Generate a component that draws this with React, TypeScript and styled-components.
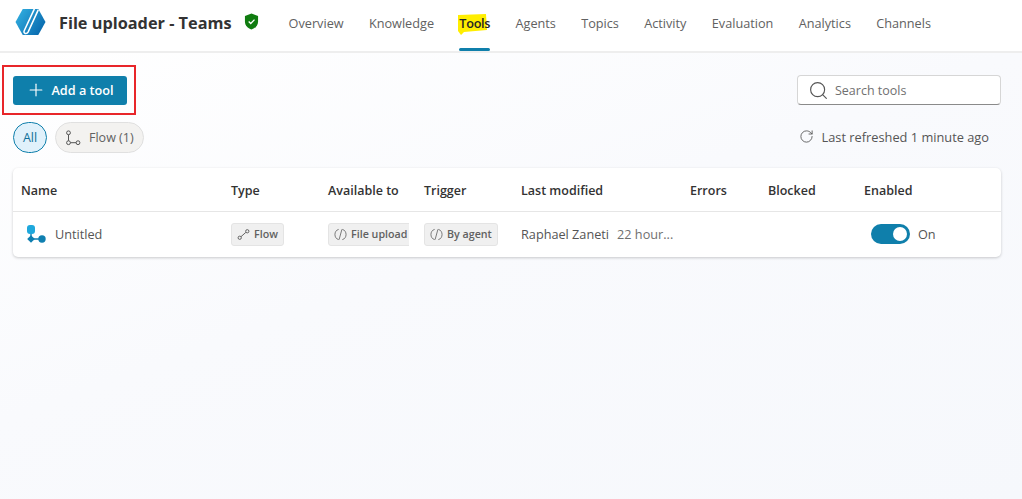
import React from 'react';
import styled, { createGlobalStyle } from 'styled-components';
import { Plus, Search, RotateCw } from 'lucide-react';

const NAV_ITEMS = ['Overview', 'Knowledge', 'Tools', 'Agents', 'Topics', 'Activity', 'Evaluation', 'Analytics', 'Channels'];
const COLUMNS = ['Name', 'Type', 'Available to', 'Trigger', 'Last modified', 'Errors', 'Blocked', 'Enabled'];
const GRID = '210px 97px 96px 97px 169px 78px 96px 1fr';

const App: React.FC = () => {
  return (
    <Page>
      <GlobalStyle />
      <Header>
        <Logo viewBox="0 0 32 28">
          <defs>
            <linearGradient id="logoFill" x1="0" y1="0" x2="1" y2="0.6">
              <stop offset="0" stopColor="#35b4e4" />
              <stop offset="1" stopColor="#0a6cb0" />
            </linearGradient>
          </defs>
          <path d="M8 0.500h16l7.500 13.500L24 27.500H8L0.500 14z" fill="url(#logoFill)" />
          <path d="M20 0.500 9.500 23c-1.200 3 2.500 4 4 1.500L24 1.500" fill="none" stroke="#fff" strokeWidth="1.600" />
        </Logo>
        <Title>File uploader - Teams</Title>
        <Shield viewBox="0 0 16 18">
          <path d="M8 0.500 15 3v6c0 4.500-3 7.200-7 8.500C4 16.200 1 13.500 1 9V3z" fill="#107c10" />
          <path d="M5 9l2.200 2.200L11.200 7" fill="none" stroke="#fff" strokeWidth="1.400" />
        </Shield>
        <Nav>
          {NAV_ITEMS.map((item) => (
            <NavItem key={item} $active={item === 'Tools'}>
              {item === 'Tools' && (
                <Highlight viewBox="0 0 32 21" preserveAspectRatio="none">
                  <path d="M3 1 31 0 32 16 9 18 6 21 3 17z" fill="#ffee00" />
                </Highlight>
              )}
              <NavLabel>{item}</NavLabel>
            </NavItem>
          ))}
        </Nav>
      </Header>

      <Content>
        <TopRow>
          <Annotated>
            <PrimaryButton>
              <Plus size={20} strokeWidth={1.4} />
              Add a tool
            </PrimaryButton>
          </Annotated>
          <SearchBox>
            <Search size={21} strokeWidth={1.3} color="#555" />
            <SearchText>Search tools</SearchText>
          </SearchBox>
        </TopRow>

        <FilterRow>
          <Chips>
            <AllChip>All</AllChip>
            <FlowChip>
              <ChipIcon viewBox="0 0 16 16">
                <circle cx="3.500" cy="2.800" r="1.900" />
                <circle cx="3.500" cy="12.700" r="1.900" />
                <circle cx="13" cy="12.700" r="1.900" />
                <path d="M3.500 4.700v6.100M5.400 12.700h5.700" />
              </ChipIcon>
              Flow (1)
            </FlowChip>
          </Chips>
          <Refreshed>
            <RotateCw size={15} strokeWidth={1.4} color="#555" />
            Last refreshed 1 minute ago
          </Refreshed>
        </FilterRow>

        <Card>
          <HeadRow>
            {COLUMNS.map((col) => (
              <span key={col}>{col}</span>
            ))}
          </HeadRow>
          <BodyRow>
            <NameCell>
              <FlowIcon viewBox="0 0 20 20">
                <path d="M5 9v6h10" stroke="#0f7fb0" strokeWidth="1.400" fill="none" />
                <rect x="1" y="1" width="8" height="9" rx="3" fill="#1fa8dc" />
                <path d="M5 11.200 8.800 15 5 18.800 1.200 15z" fill="#0f7fb0" />
                <circle cx="16" cy="15" r="3.700" fill="#0f7fb0" />
              </FlowIcon>
              Untitled
            </NameCell>
            <div>
              <Tag>
                <SmallIcon viewBox="0 0 12 12">
                  <circle cx="2.500" cy="9" r="1.500" />
                  <circle cx="9.500" cy="3" r="1.500" />
                  <path d="M3.700 8 8.200 4" />
                </SmallIcon>
                Flow
              </Tag>
            </div>
            <Clip>
              <Tag>
                <CodeIcon />
                File upload
              </Tag>
            </Clip>
            <div>
              <Tag>
                <CodeIcon />
                By agent
              </Tag>
            </div>
            <Modified>
              <span>Raphael Zaneti</span>
              <When>22 hour...</When>
            </Modified>
            <div />
            <div />
            <ToggleCell>
              <Toggle>
                <Knob />
              </Toggle>
              On
            </ToggleCell>
          </BodyRow>
        </Card>
      </Content>
    </Page>
  );
};

const CodeIcon: React.FC = () => (
  <SmallIcon viewBox="0 0 14 14">
    <path d="M5 1.500C2.500 2 1 4.500 1 7s1.500 5 4 5.500M9 1.500c2.500.5 4 3 4 5.500s-1.500 5-4 5.500M8.500 1.500l-3 11" />
  </SmallIcon>
);

const GlobalStyle = createGlobalStyle`
  html, body {
    margin: 0;
    padding: 0;
    background: #fff;
  }
  body {
    font-family: "Open Sans", "Noto Sans", sans-serif;
    color: #424242;
  }
`;

const Page = styled.div`
  width: 1022px;
  height: 499px;
  overflow: hidden;
  display: flex;
  flex-direction: column;
`;

const Header = styled.header`
  height: 51px;
  flex: none;
  box-sizing: content-box;
  display: flex;
  align-items: flex-start;
  padding-left: 15px;
  border-bottom: 2px solid #eeeeee;
  background: #fff;
`;

const Logo = styled.svg`
  width: 31px;
  height: 28px;
  margin-top: 8px;
  flex: none;
`;

const Title = styled.div`
  margin: 12px 0 0 13px;
  font-size: 16.300px;
  line-height: 22px;
  font-weight: 700;
  color: #333;
  white-space: nowrap;
`;

const Shield = styled.svg`
  width: 15px;
  height: 17px;
  margin: 13px 0 0 12px;
  flex: none;
`;

const Nav = styled.nav`
  display: flex;
  align-self: stretch;
  margin-left: 30px;
  gap: 25.300px;
`;

const NavItem = styled.div<{ $active?: boolean }>`
  position: relative;
  display: flex;
  align-items: center;
  height: 51px;
  padding-bottom: 6px;
  box-sizing: border-box;
  font-size: 12.700px;
  color: ${(p) => (p.$active ? '#242424' : '#616161')};
  font-weight: ${(p) => (p.$active ? 600 : 400)};
  letter-spacing: ${(p) => (p.$active ? '-0.3px' : '0')};

  ${(p) =>
    p.$active &&
    `
    &::after {
      content: '';
      position: absolute;
      left: 0;
      right: 0;
      bottom: 0;
      height: 3px;
      border-radius: 2px;
      background: #0f7fab;
    }
  `}
`;

const NavLabel = styled.span`
  position: relative;
`;

const Highlight = styled.svg`
  position: absolute;
  left: -4px;
  top: 14px;
  width: 32px;
  height: 21px;
`;

const Content = styled.main`
  flex: 1;
  padding: 12px 21px 0 2px;
  background: linear-gradient(160deg, #ffffff 0%, #f9fafd 45%, #f6f8fc 100%);
`;

const TopRow = styled.div`
  display: flex;
  justify-content: space-between;
  align-items: center;
`;

const Annotated = styled.div`
  width: 134px;
  height: 50px;
  box-sizing: border-box;
  border: 2px solid #e8262a;
  padding: 9px;
`;

const PrimaryButton = styled.div`
  width: 114px;
  height: 29px;
  box-sizing: border-box;
  padding-bottom: 1px;
  display: flex;
  align-items: center;
  justify-content: center;
  gap: 5px;
  background: #0f7fab;
  border-radius: 3px;
  color: #fff;
  font-size: 12.700px;
  font-weight: 600;
  white-space: nowrap;
`;

const SearchBox = styled.div`
  width: 204px;
  height: 30px;
  box-sizing: border-box;
  display: flex;
  align-items: center;
  gap: 6px;
  padding-left: 10px;
  background: #fff;
  border: 1px solid #d6d6d6;
  border-bottom: 1px solid #8a8a8a;
  border-radius: 4px;
`;

const SearchText = styled.span`
  font-size: 12.500px;
  color: #707070;
`;

const FilterRow = styled.div`
  display: flex;
  justify-content: space-between;
  align-items: center;
  margin-top: 7px;
  padding-left: 11px;
  padding-right: 12px;
`;

const Chips = styled.div`
  display: flex;
  gap: 8px;
`;

const AllChip = styled.div`
  width: 34px;
  height: 31px;
  box-sizing: border-box;
  display: flex;
  align-items: center;
  justify-content: center;
  border: 1px solid #0f7fab;
  border-radius: 16px;
  background: #e0f1fb;
  color: #0f6f99;
  font-size: 12.500px;
`;

const FlowChip = styled.div`
  width: 89px;
  height: 31px;
  box-sizing: border-box;
  display: flex;
  align-items: center;
  gap: 8px;
  padding-left: 9px;
  border: 1px solid #e0e0e0;
  border-radius: 16px;
  background: #f3f2f0;
  color: #616161;
  font-size: 12.500px;
`;

const ChipIcon = styled.svg`
  width: 16px;
  height: 16px;
  flex: none;
  fill: none;
  stroke: #555;
  stroke-width: 1;
`;

const Refreshed = styled.div`
  display: flex;
  align-items: center;
  gap: 8px;
  padding-bottom: 2px;
  font-size: 12.800px;
  color: #555;
`;

const Card = styled.section`
  margin: 15px 0 0 11px;
  width: 988px;
  background: #fff;
  border-radius: 5px;
  box-shadow: 0 1px 3px rgba(0, 0, 0, 0.2);
`;

const HeadRow = styled.div`
  display: grid;
  grid-template-columns: ${GRID};
  align-items: center;
  height: 44px;
  padding: 1px 0 0 8px;
  box-sizing: border-box;
  border-bottom: 1px solid #e6e6e6;
  font-size: 12.500px;
  font-weight: 600;
  color: #333;
`;

const BodyRow = styled.div`
  display: grid;
  grid-template-columns: ${GRID};
  align-items: center;
  height: 45px;
  padding: 0 0 1px 8px;
  box-sizing: border-box;
  font-size: 12.700px;
  color: #555;
`;

const NameCell = styled.div`
  display: flex;
  align-items: center;
  gap: 9px;
  padding-left: 5px;
`;

const FlowIcon = styled.svg`
  width: 20px;
  height: 20px;
`;

const Tag = styled.span`
  display: inline-flex;
  align-items: center;
  gap: 4px;
  height: 23px;
  box-sizing: border-box;
  padding: 0 5px;
  background: #f0f0f0;
  border: 1px solid #e4e4e4;
  border-radius: 3px;
  font-size: 10.700px;
  font-weight: 600;
  color: #616161;
  white-space: nowrap;
`;

const Clip = styled.div`
  width: 81px;
  overflow: hidden;
  display: flex;
`;

const SmallIcon = styled.svg`
  width: 13px;
  height: 13px;
  flex: none;
  fill: none;
  stroke: #616161;
  stroke-width: 0.9;
`;

const Modified = styled.div`
  display: flex;
  gap: 8px;
  white-space: nowrap;
`;

const When = styled.span`
  color: #707070;
`;

const ToggleCell = styled.div`
  display: flex;
  align-items: center;
  gap: 8px;
  padding-left: 7px;
`;

const Toggle = styled.div`
  width: 39px;
  height: 20px;
  box-sizing: border-box;
  display: flex;
  align-items: center;
  justify-content: flex-end;
  padding-right: 3px;
  border-radius: 10px;
  background: #0f7fab;
`;

const Knob = styled.div`
  width: 14px;
  height: 14px;
  border-radius: 50%;
  background: #fff;
`;

export default App;
